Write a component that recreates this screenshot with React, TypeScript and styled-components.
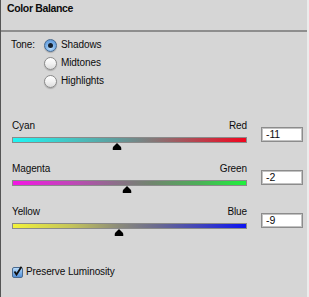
import styled, { createGlobalStyle } from 'styled-components';

const GlobalStyle = createGlobalStyle`
  body {
    margin: 0;
    background: #d6d6d6;
    font-family: "Liberation Sans", Arial, sans-serif;
  }
`;

interface SliderData {
  left: string;
  right: string;
  value: number;
  gradient: string;
}

const sliders: SliderData[] = [
  {
    left: 'Cyan',
    right: 'Red',
    value: -11,
    gradient: 'linear-gradient(to right, #1ff6f4 0%, #45c4c2 25%, #609c9c 45%, #847878 60%, #c03a48 82%, #f2051e 100%)',
  },
  {
    left: 'Magenta',
    right: 'Green',
    value: -2,
    gradient: 'linear-gradient(to right, #f416e4 0%, #c046b8 25%, #8a7088 45%, #70866e 60%, #4cb058 80%, #1ef23c 100%)',
  },
  {
    left: 'Yellow',
    right: 'Blue',
    value: -9,
    gradient: 'linear-gradient(to right, #f2f23a 0%, #c4c45a 25%, #8c8c7a 45%, #6a6a90 62%, #3c40c0 82%, #0c14f2 100%)',
  },
];

const tones = ['Shadows', 'Midtones', 'Highlights'];

const Thumb = () => (
  <svg width="9" height="7" viewBox="0 0 9 7">
    <polygon points="4.5,0 6.5,2 8,3.5 9,5 9,7 0,7 0,5 1,3.5 2.5,2" fill="#000" />
  </svg>
);

export default function App() {
  return (
    <>
      <GlobalStyle />
      <Panel>
        <Header>
          <Title>Color Balance</Title>
        </Header>

        <ToneGroup>
          <ToneLabel>Tone:</ToneLabel>
          <Options>
            {tones.map((t, i) => (
              <OptionRow key={t}>
                <Radio checked={i === 0} />
                <OptionText>{t}</OptionText>
              </OptionRow>
            ))}
          </Options>
        </ToneGroup>

        <Sliders>
          {sliders.map((s) => (
            <SliderRow key={s.left}>
              <SliderMain>
                <LabelRow>
                  <span>{s.left}</span>
                  <span>{s.right}</span>
                </LabelRow>
                <Bar style={{ background: s.gradient }} />
                <ThumbTrack>
                  <ThumbPos style={{ left: `${((s.value + 100) / 200) * 100}%` }}>
                    <Thumb />
                  </ThumbPos>
                </ThumbTrack>
              </SliderMain>
              <ValueBox>{s.value}</ValueBox>
            </SliderRow>
          ))}
        </Sliders>

        <CheckRow>
          <Checkbox>
            <svg width="11" height="11" viewBox="0 0 11 11">
              <path d="M2.5 5.5 L4.5 8.5 L9.5 0.8" fill="none" stroke="#111" strokeWidth="1.8" />
            </svg>
          </Checkbox>
          <CheckText>Preserve Luminosity</CheckText>
        </CheckRow>
      </Panel>
    </>
  );
}

const Panel = styled.div`
  width: 309px;
  height: 297px;
  box-sizing: border-box;
  background: #d6d6d6;
  border-left: 1px solid #555;
  border-right: 2px solid #ececec;
  display: flex;
  flex-direction: column;
  color: #0c0c0c;
  font-size: 10px;
  letter-spacing: -0.1px;
`;

const Header = styled.div`
  height: 32px;
  box-sizing: border-box;
  border-bottom: 2px solid #8e8e8e;
  padding: 2px 0 0 6px;
`;

const Title = styled.div`
  font-weight: bold;
  font-size: 10.5px;
  line-height: 12px;
  letter-spacing: -0.35px;
`;

const ToneGroup = styled.div`
  display: flex;
  padding: 4px 0 0 10px;
`;

const ToneLabel = styled.div`
  width: 33px;
  line-height: 18px;
`;

const Options = styled.div`
  display: flex;
  flex-direction: column;
`;

const OptionRow = styled.div`
  height: 18px;
  display: flex;
  align-items: center;
  gap: 4px;
`;

const Radio = styled.span<{ checked?: boolean }>`
  width: 13px;
  height: 13px;
  box-sizing: border-box;
  border-radius: 50%;
  position: relative;
  border: 1px solid ${(p) => (p.checked ? '#46698f' : '#8a8a8a')};
  background: ${(p) =>
    p.checked
      ? 'radial-gradient(circle at 50% 70%, #c4e2fb 0%, #7fb4ea 45%, #4f8cd4 100%)'
      : 'linear-gradient(#ffffff 0%, #f2f2f2 50%, #dcdcdc 100%)'};
  box-shadow: 0 1px 1px rgba(0, 0, 0, 0.2);

  &::after {
    content: '';
    display: ${(p) => (p.checked ? 'block' : 'none')};
    position: absolute;
    left: 3px;
    top: 3px;
    width: 5px;
    height: 5px;
    border-radius: 50%;
    background: #15202e;
  }
`;

const OptionText = styled.span`
  line-height: 12px;
`;

const Sliders = styled.div`
  display: flex;
  flex-direction: column;
  gap: 12px;
  padding: 29px 0 0 11px;
`;

const SliderRow = styled.div`
  display: flex;
  align-items: flex-start;
`;

const SliderMain = styled.div`
  width: 235px;
  display: flex;
  flex-direction: column;
`;

const LabelRow = styled.div`
  height: 14px;
  line-height: 14px;
  display: flex;
  justify-content: space-between;
`;

const Bar = styled.div`
  margin-top: 4px;
  height: 6px;
  box-sizing: border-box;
  border: 1px solid #8a8a8a;
`;

const ThumbTrack = styled.div`
  height: 7px;
  position: relative;
`;

const ThumbPos = styled.div`
  position: absolute;
  top: 0;
  transform: translateX(-50%);
  display: flex;
`;

const ValueBox = styled.div`
  margin: 8px 0 0 14px;
  width: 42px;
  height: 15px;
  box-sizing: border-box;
  border: 1px solid #8c8c8c;
  box-shadow: inset 0 0 0 1px #c2c2c2;
  background: #fff;
  padding-left: 4px;
  line-height: 13px;
  font-size: 10.5px;
`;

const CheckRow = styled.div`
  display: flex;
  align-items: center;
  gap: 3px;
  height: 14px;
  margin-top: 29px;
  padding-left: 11px;
`;

const Checkbox = styled.span`
  width: 11px;
  height: 11px;
  box-sizing: border-box;
  border: 1px solid #4a6a90;
  border-radius: 2px;
  background: linear-gradient(#b9dcfa 0%, #7fb3ea 50%, #5590d6 100%);
  display: flex;
  align-items: center;
  justify-content: center;

  svg {
    flex: none;
    margin-top: -2px;
  }
`;

const CheckText = styled.span`
  line-height: 14px;
`;
